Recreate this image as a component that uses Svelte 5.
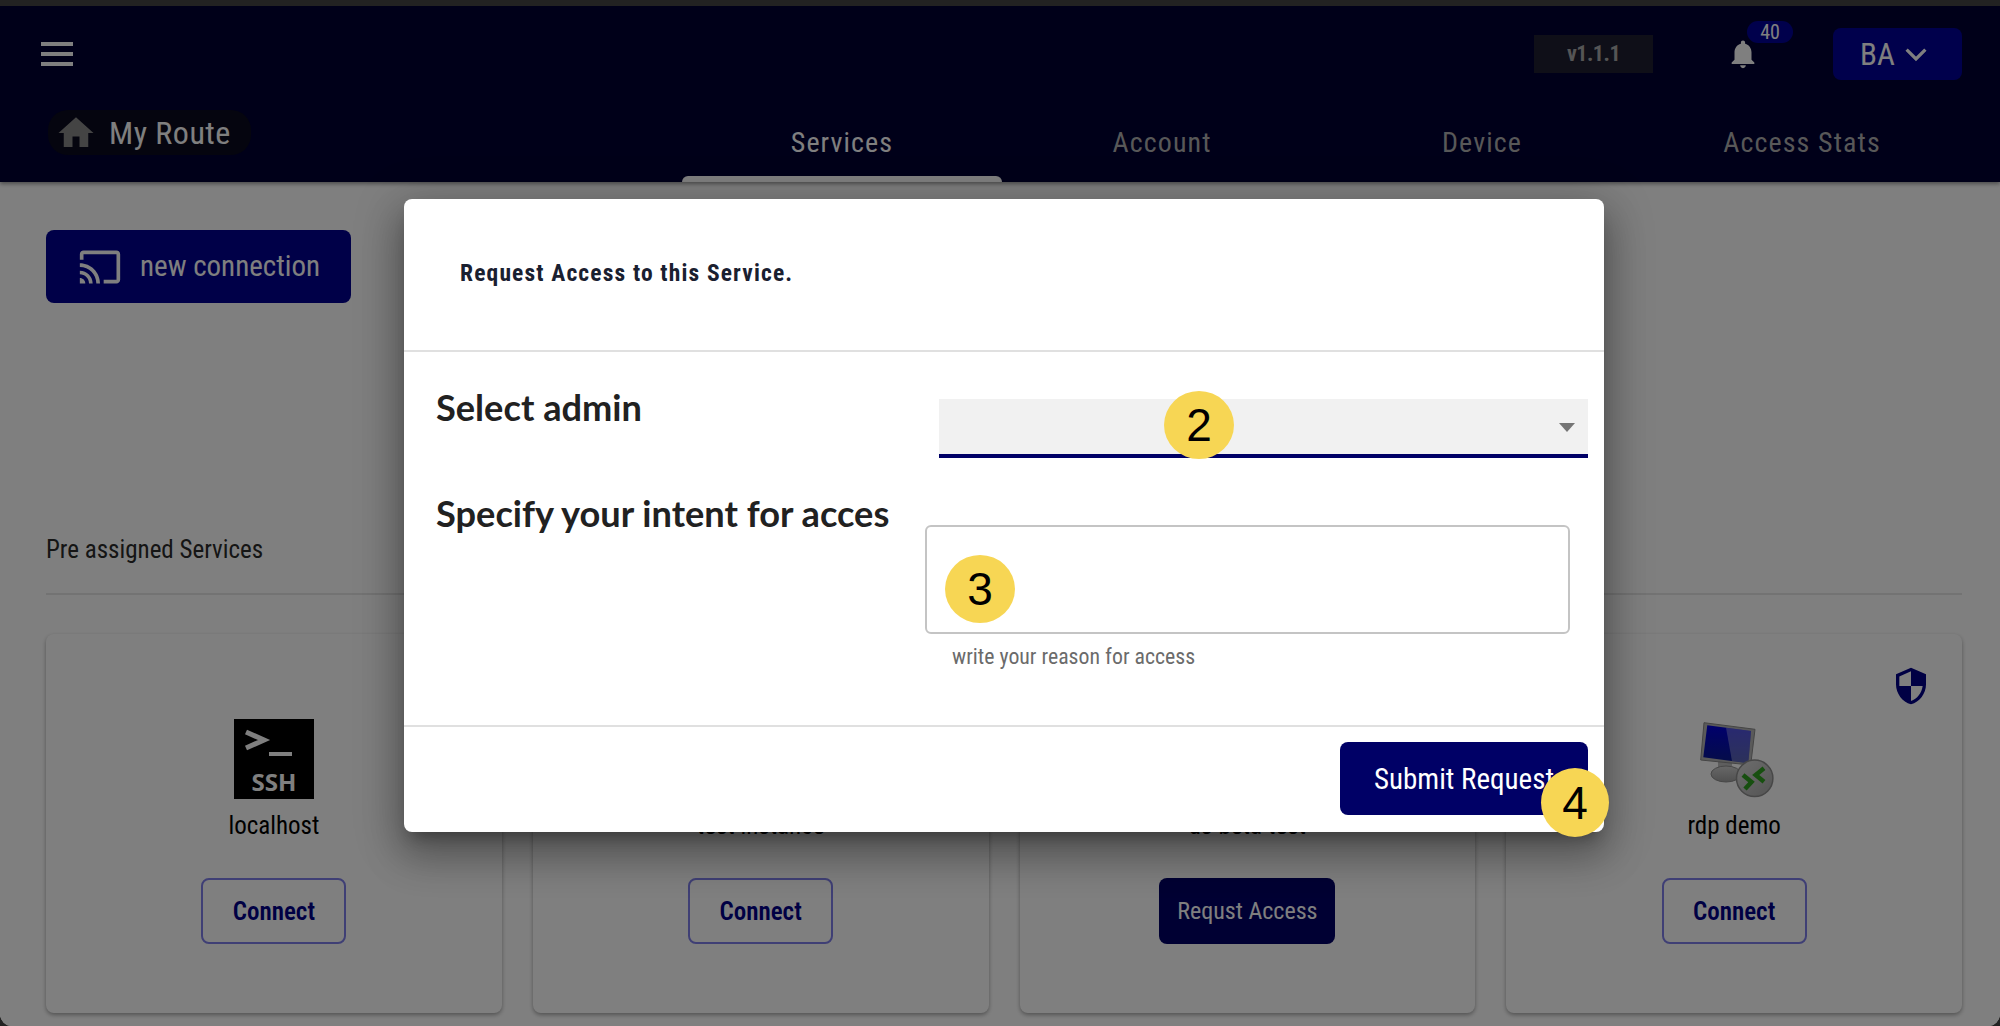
<script>
  const tabs = ["Services", "Account", "Device", "Access Stats"];
  const services = [
    { name: "localhost", icon: "ssh", action: "Connect" },
    { name: "test instance", icon: "ssh", action: "Connect" },
    { name: "us-beta-test", icon: "ssh", action: "Requst Access", primary: true },
    { name: "rdp demo", icon: "rdp", action: "Connect", shield: true },
  ];
</script>

<div class="page">
  <header class="header">
    <div class="top-row">
      <button class="menu-btn" aria-label="menu"><span></span><span></span><span></span></button>
      <div class="version">v1.1.1</div>
      <div class="bell">
        <svg viewBox="0 0 24 24" width="34" height="34"><path d="M12 22c1.100 0 2-.9 2-2h-4c0 1.100.89 2 2 2zm6-6v-5c0-3.070-1.640-5.640-4.500-6.320V4c0-.83-.67-1.500-1.500-1.500s-1.500.67-1.500 1.500v.68C7.630 5.360 6 7.920 6 11v5l-2 2v1h16v-1l-2-2z" /></svg>
        <span class="count">40</span>
      </div>
      <button class="user">
        BA
        <svg viewBox="0 0 24 24" width="30" height="30"><path d="M4.500 8.500 12 16l7.500-7.500" /></svg>
      </button>
    </div>
    <div class="nav-row">
      <div class="route">
        <svg viewBox="0 0 24 24" width="42" height="42"><path d="M10 20v-6h4v6h5v-8h3L12 3 2 12h3v8z" /></svg>
        <span>My Route</span>
      </div>
      <nav class="tabs">
        {#each tabs as tab, i}
          <div class="tab" class:active={i === 0}>{tab}</div>
        {/each}
      </nav>
    </div>
  </header>

  <main class="content">
    <button class="new-conn">
      <svg viewBox="0 0 24 24" width="44" height="44"><path d="M21 3H3c-1.100 0-2 .9-2 2v3h2V5h18v14h-7v2h7c1.100 0 2-.9 2-2V5c0-1.100-.9-2-2-2zM1 18v3h3c0-1.660-1.340-3-3-3zm0-4v2c2.760 0 5 2.240 5 5h2c0-3.870-3.130-7-7-7zm0-4v2c4.970 0 9 4.030 9 9h2c0-6.080-4.930-11-11-11z" /></svg>
      <span class="new-label">new connection</span>
    </button>

    <h2 class="section-title">Pre assigned Services</h2>

    <div class="cards">
      {#each services as s}
        <div class="card">
          {#if s.shield}
            <svg class="shield" viewBox="0 0 24 24" width="40" height="40"><path d="M12 1 3 5v6c0 5.550 3.840 10.740 9 12 5.160-1.260 9-6.450 9-12V5l-9-4zm0 10.990h7c-.53 4.120-3.280 7.790-7 8.940V12H5V6.300l7-3.110v8.800z" /></svg>
          {/if}
          {#if s.icon === "ssh"}
            <svg class="icon" viewBox="0 0 80 80" width="80" height="80">
              <rect width="80" height="80" fill="#000" />
              <path d="M12 13 30 21 12 29" fill="none" stroke="#fff" stroke-width="5" />
              <rect x="35" y="33" width="23" height="4" fill="#fff" />
              <text x="40" y="72" text-anchor="middle" class="ssh-text">SSH</text>
            </svg>
          {:else}
            <svg class="icon" viewBox="0 0 80 80" width="80" height="80">
              <defs>
                <linearGradient id="stand" x1="0" y1="0" x2="0" y2="1">
                  <stop offset="0" stop-color="#d0d0d0" />
                  <stop offset="1" stop-color="#a0a0a0" />
                </linearGradient>
                <linearGradient id="disc" x1="0" y1="0" x2="1" y2="1">
                  <stop offset="0" stop-color="#dcdcdc" />
                  <stop offset="1" stop-color="#a8a8a8" />
                </linearGradient>
                <linearGradient id="screen" x1="0" y1="0" x2="0" y2="1">
                  <stop offset="0" stop-color="#0000d8" />
                  <stop offset="1" stop-color="#0a1a90" />
                </linearGradient>
              </defs>
              <rect x="24" y="42" width="14" height="10" fill="#bcbcbc" />
              <ellipse cx="32" cy="55" rx="15" ry="8" fill="url(#stand)" stroke="#8e8e8e" />
              <polygon points="10,3.700 61,10.300 56.700,46 6.700,41" fill="#b4b4b4" stroke="#8a8a8a" />
              <polygon points="13.300,6.300 57,12 54.300,44.300 9.300,38.300" fill="url(#screen)" />
              <polygon points="32,8.700 57,12 54.300,44.300 38,42" fill="#fff" opacity="0.32" />
              <circle cx="60.700" cy="59.300" r="18.200" fill="url(#disc)" stroke="#8e8e8e" stroke-width="1.500" />
              <path d="M49 56 57.500 63 51 70M70 49.300 61.700 56 70 62.700" fill="none" stroke="#2f9e20" stroke-width="4.500" />
            </svg>
          {/if}
          <div class="name">{s.name}</div>
          <button class="action" class:primary={s.primary}>{s.action}</button>
        </div>
      {/each}
    </div>
  </main>

  <div class="overlay">
    <div class="modal">
      <div class="modal-head">Request Access to this Service.</div>
      <div class="modal-body">
        <div class="row">
          <div class="label">Select admin</div>
          <div class="select"><i class="caret"></i></div>
        </div>
        <div class="row second">
          <div class="label">Specify your intent for acces</div>
          <div class="field">
            <div class="textarea"></div>
            <div class="hint">write your reason for access</div>
          </div>
        </div>
      </div>
      <div class="modal-foot">
        <button class="submit">Submit Request</button>
      </div>
      <span class="step step-2">2</span>
      <span class="step step-3">3</span>
      <span class="step step-4">4</span>
    </div>
  </div>
</div>

<style>
  :global(body) {
    background: #222;
  }

  .page {
    position: relative;
    height: 1020px;
    margin-top: 6px;
    overflow: hidden;
    background: #fff;
    border-radius: 0 0 12px 12px;
    font-family: Roboto, sans-serif;
    font-stretch: 75%;
  }

  button {
    font-family: inherit;
    font-stretch: inherit;
    border: none;
    cursor: pointer;
  }

  .header {
    height: 176px;
    background: #000033;
    color: #fff;
    box-shadow: 0 2px 4px rgba(0, 0, 0, 0.4);
  }

  .top-row {
    display: flex;
    align-items: center;
    height: 96px;
    padding: 0 38px 0 41px;
  }

  .menu-btn {
    display: flex;
    flex-direction: column;
    gap: 6px;
    width: 32px;
    padding: 0;
    margin-right: auto;
    background: none;
  }

  .menu-btn span {
    height: 4px;
    background: #fff;
  }

  .version {
    width: 119px;
    height: 38px;
    line-height: 38px;
    text-align: center;
    background: #1e1e30;
    color: #aaa;
    font-size: 22px;
    font-weight: 700;
    letter-spacing: -0.5px;
  }

  .bell {
    position: relative;
    display: flex;
    margin: 0 73px 0 73px;
    fill: #fff;
  }

  .count {
    position: absolute;
    left: 21px;
    top: -16px;
    width: 46px;
    height: 22px;
    line-height: 22px;
    text-align: center;
    border-radius: 11px;
    background: #000099;
    font-size: 20px;
  }

  .user {
    display: flex;
    align-items: center;
    gap: 6px;
    width: 129px;
    height: 52px;
    padding-left: 27px;
    background: #000099;
    color: #fff;
    border-radius: 8px;
    font-size: 31px;
  }

  .user svg {
    fill: none;
    stroke: #fff;
    stroke-width: 2.600;
  }

  .nav-row {
    display: flex;
    justify-content: space-between;
    height: 80px;
  }

  .route {
    display: flex;
    align-items: center;
    gap: 12px;
    height: 45px;
    margin: 8px 0 0 48px;
    padding: 0 20px 0 7px;
    border-radius: 20px;
    background: #0a0a1e;
    font-size: 32px;
    letter-spacing: 0.5px;
    fill: #888;
  }

  .tabs {
    display: grid;
    grid-template-columns: repeat(4, 320px);
    margin-right: 38px;
  }

  .tab {
    position: relative;
    display: flex;
    align-items: center;
    justify-content: center;
    color: #b0b0b0;
    font-size: 28px;
    letter-spacing: 1.100px;
  }

  .tab.active {
    color: #fff;
  }

  .tab.active::after {
    content: "";
    position: absolute;
    left: 0;
    right: 0;
    bottom: 0;
    height: 6px;
    background: #fff;
    border-radius: 6px 6px 0 0;
  }

  .content {
    padding: 48px 38px 0 46px;
  }

  .new-conn {
    display: flex;
    align-items: center;
    gap: 18px;
    width: 305px;
    height: 73px;
    padding-left: 32px;
    background: #000090;
    color: #fff;
    border-radius: 8px;
    font-size: 29px;
    fill: #fff;
  }

  .new-label {
    padding-bottom: 2px;
  }

  .section-title {
    margin: 234px 0 0;
    padding-bottom: 30px;
    line-height: 26px;
    border-bottom: 2px solid #e6e6e6;
    color: #2a2a2a;
    font-size: 25px;
    font-weight: 400;
  }

  .cards {
    display: grid;
    grid-template-columns: repeat(4, 1fr);
    gap: 31px;
    margin-top: 39px;
  }

  .card {
    position: relative;
    display: flex;
    flex-direction: column;
    align-items: center;
    height: 379px;
    padding-top: 85px;
    box-sizing: border-box;
    border-radius: 8px;
    background: #fff;
    box-shadow: 0 2px 4px rgba(0, 0, 0, 0.35);
  }

  .shield {
    position: absolute;
    top: 32px;
    right: 31px;
    fill: #000088;
  }

  .icon {
    display: block;
  }

  .ssh-text {
    font-family: "Open Sans", sans-serif;
    font-stretch: 100%;
    font-weight: 700;
    font-size: 24px;
    fill: #fff;
  }

  .name {
    margin-top: 14px;
    line-height: 26px;
    font-size: 25px;
    color: #000;
  }

  .action {
    width: 145px;
    height: 66px;
    margin-top: 39px;
    background: #fff;
    border: 2px solid #7e7eea;
    border-radius: 8px;
    color: #000088;
    font-size: 25px;
    font-weight: 600;
  }

  .action.primary {
    width: 176px;
    background: #000066;
    border: none;
    color: #fff;
    font-size: 24px;
    font-weight: 400;
  }

  .overlay {
    position: absolute;
    inset: 0;
    display: flex;
    justify-content: center;
    padding: 193px 0 0 8px;
    background: rgba(0, 0, 0, 0.5);
  }

  .modal {
    position: relative;
    width: 1200px;
    height: 633px;
    background: #fff;
    border-radius: 8px;
    box-shadow:
      0 11px 15px -7px rgba(0, 0, 0, 0.3),
      0 24px 38px 3px rgba(0, 0, 0, 0.22),
      0 9px 46px 8px rgba(0, 0, 0, 0.2);
  }

  .modal-head {
    height: 153px;
    padding: 59px 0 0 56px;
    box-sizing: border-box;
    line-height: 30px;
    border-bottom: 2px solid #e0e0e0;
    color: #1a2030;
    font-size: 23.500px;
    font-weight: 700;
    letter-spacing: 1.150px;
  }

  .modal-body {
    height: 373px;
    padding: 34px 16px 0 32px;
    box-sizing: border-box;
  }

  .row {
    display: flex;
    justify-content: space-between;
  }

  .row.second {
    margin-top: 34px;
  }

  .label {
    margin-top: -1px;
    line-height: 44px;
    color: #212121;
    font-family: Lato, sans-serif;
    font-stretch: 100%;
    font-size: 36.200px;
    font-weight: 700;
  }

  .select {
    position: relative;
    width: 649px;
    height: 59px;
    margin-top: 13px;
    box-sizing: border-box;
    background: #f1f1f1;
    border-bottom: 4px solid #000066;
  }

  .caret {
    position: absolute;
    right: 13px;
    top: 24px;
    border: 8px solid transparent;
    border-top: 9px solid #757575;
    border-bottom: none;
  }

  .field {
    width: 645px;
    margin: 33px 18px 0 0;
  }

  .textarea {
    height: 109px;
    box-sizing: border-box;
    border: 2px solid #c4c4c4;
    border-radius: 6px;
  }

  .hint {
    margin: 11px 0 0 27px;
    line-height: 24px;
    color: #6b6b6b;
    font-size: 21.800px;
  }

  .modal-foot {
    display: flex;
    justify-content: flex-end;
    height: 107px;
    padding: 15px 16px 0 0;
    box-sizing: border-box;
    border-top: 2px solid #e0e0e0;
  }

  .submit {
    width: 248px;
    height: 73px;
    background: #000066;
    color: #fff;
    border-radius: 8px;
    font-size: 29px;
    font-weight: 400;
  }

  .step {
    position: absolute;
    display: flex;
    align-items: center;
    justify-content: center;
    width: 70px;
    height: 68px;
    border-radius: 50%;
    background: #f7d654;
    color: #000;
    font-family: "Liberation Sans", sans-serif;
    font-stretch: 100%;
    font-size: 46px;
  }

  .step-2 {
    left: 760px;
    top: 192px;
  }

  .step-3 {
    left: 541px;
    top: 356px;
  }

  .step-4 {
    left: 1137px;
    top: 569px;
    width: 68px;
    height: 69px;
  }
</style>
